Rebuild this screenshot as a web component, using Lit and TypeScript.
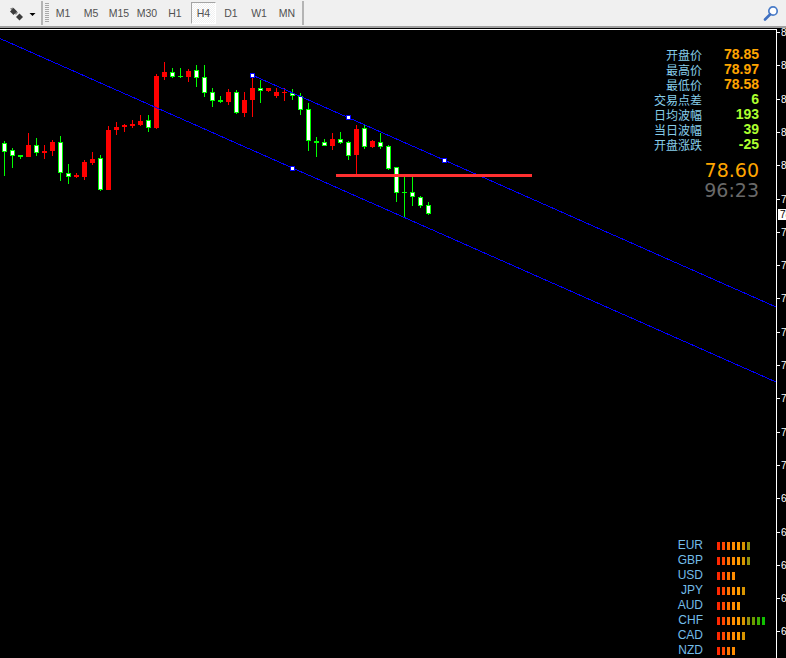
import { LitElement, html, css, svg } from "lit";
import { customElement } from "lit/decorators.js";

type Candle = [number, number, number, number, number, "g" | "r"];

const CANDLES: Candle[] = [
  [4, 141, 176, 143, 152, "g"], [12, 148, 168, 150, 156, "g"], [20, 155, 159, 155, 157, "g"],
  [28, 133, 157, 145, 157, "r"], [36, 138, 156, 145, 153, "g"], [44, 145, 159, 151, 153, "r"],
  [52, 140, 156, 142, 151, "r"], [60, 136, 181, 142, 173, "g"], [68, 164, 184, 173, 177, "g"],
  [76, 173, 178, 175, 177, "r"], [84, 160, 180, 162, 177, "r"], [92, 152, 165, 159, 163, "r"],
  [100, 155, 191, 158, 190, "g"], [108, 126, 190, 130, 190, "r"], [116, 122, 135, 127, 130, "r"],
  [124, 124, 132, 125, 127, "r"], [132, 120, 128, 124, 126, "r"], [140, 115, 126, 121, 125, "r"],
  [148, 115, 132, 120, 128, "g"], [156, 74, 129, 76, 128, "r"], [164, 62, 80, 72, 77, "r"],
  [172, 68, 78, 72, 77, "g"], [180, 68, 78, 76, 77, "g"], [188, 69, 82, 71, 77, "r"],
  [196, 65, 87, 70, 78, "g"], [204, 65, 97, 77, 93, "g"], [212, 88, 107, 92, 101, "g"],
  [220, 96, 103, 100, 102, "g"], [228, 89, 105, 92, 102, "r"], [236, 90, 114, 92, 113, "g"],
  [244, 92, 117, 100, 113, "r"], [252, 78, 117, 88, 100, "r"], [260, 80, 103, 88, 91, "g"],
  [268, 88, 92, 88, 91, "r"], [276, 88, 98, 92, 96, "r"], [284, 88, 101, 92, 93, "r"],
  [292, 89, 100, 93, 96, "g"], [300, 93, 115, 96, 110, "g"], [308, 103, 151, 109, 141, "g"],
  [316, 137, 157, 141, 143, "g"], [324, 139, 146, 142, 146, "g"], [332, 133, 150, 139, 146, "r"],
  [340, 132, 144, 139, 143, "g"], [348, 141, 160, 142, 156, "g"], [356, 125, 175, 129, 155, "r"],
  [364, 124, 149, 128, 147, "g"], [372, 140, 148, 141, 147, "r"], [380, 133, 149, 142, 147, "g"],
  [388, 145, 170, 146, 169, "g"], [396, 167, 202, 167, 193, "g"], [404, 175, 217, 192, 193, "g"],
  [412, 175, 206, 192, 197, "g"], [420, 196, 208, 197, 206, "g"], [428, 202, 215, 205, 214, "g"],
];

const HANDLES: [number, number][] = [[250, 73], [346, 115], [442, 158], [290, 166]];
const TIMEFRAMES = ["M1", "M5", "M15", "M30", "H1", "H4", "D1", "W1", "MN"];
const STATS: [string, string, "o" | "y"][] = [
  ["开盘价", "78.85", "o"], ["最高价", "78.97", "o"], ["最低价", "78.58", "o"],
  ["交易点差", "6", "y"], ["日均波幅", "193", "y"], ["当日波幅", "39", "y"], ["开盘涨跌", "-25", "y"],
];
const STRENGTH: [string, number][] = [
  ["EUR", 7], ["GBP", 7], ["USD", 4], ["JPY", 6], ["AUD", 5], ["CHF", 10], ["CAD", 6], ["NZD", 4],
];
const SEG = ["#ff2800", "#ff4800", "#ff7400", "#ff8c00", "#ff9c00", "#d89400", "#949410", "#6c9c00", "#40b000", "#10c000"];

@customElement("app-root")
export class AppRoot extends LitElement {
  static styles = css`
    :host { display: block; width: 786px; height: 658px; overflow: hidden; background: #000;
      font-family: "Liberation Sans", Arial, "Noto Sans CJK SC", sans-serif; }
    .toolbar { display: flex; align-items: center; height: 26px; background: #f0f0f0;
      border-bottom: 2px solid #a0a0a0; box-sizing: content-box; }
    .menu { width: 41px; height: 26px; flex: none; display: block; }
    .sep { width: 2px; height: 24px; background: #b4b4b4; flex: none; }
    .grip { width: 4px; height: 20px; margin-left: 2px; flex: none;
      background: repeating-linear-gradient(#a8a8a8 0 1px, #f0f0f0 1px 2px); }
    .tfs { display: flex; flex: none; margin-right: 1px; }
    .tf { width: 28px; height: 22px; box-sizing: border-box; display: flex; align-items: center;
      justify-content: center; font-size: 10.5px; color: #505050; }
    .tf.on { width: 25px; margin: 0 1px 0 2px; border: 1px solid; border-color: #a4a4a4 #fff #fff #a4a4a4;
      background: repeating-conic-gradient(#fff 0 25%, #f0f0f0 0 50%) 0 0 / 2px 2px; }
    .spacer { flex: 1; }
    .search { display: block; width: 16px; height: 16px; margin-right: 7px; flex: none; }
    .chart { position: relative; height: 630px; background: #000; overflow: hidden; }
    .plot { display: block; width: 786px; height: 630px; }
    .axis { font-size: 10px; fill: #fff; }
    .axis-now { font-size: 10px; fill: #000; }
    .info { position: absolute; top: 19px; right: 27px; display: flex; flex-direction: column; align-items: flex-end; }
    .stats { display: grid; grid-template-columns: auto 57px; grid-auto-rows: 15px; align-items: center; justify-items: end; }
    .lab { font-size: 12px; line-height: 15px; color: #87ceeb; font-family: "Noto Sans CJK SC", sans-serif; }
    .val { font-size: 14px; line-height: 15px; font-weight: 700; }
    .o { color: #ffa500; }
    .y { color: #adff2f; }
    .big { font-size: 19px; line-height: 19px; font-family: "DejaVu Sans", sans-serif; }
    .price { color: #ffa500; margin-top: 9px; }
    .timer { color: #696969; margin-top: 1px; }
    .strength { position: absolute; top: 510px; left: 660px; display: grid;
      grid-template-columns: 43px auto; column-gap: 14px; grid-auto-rows: 15px; align-items: center; }
    .cur { font-size: 12px; line-height: 15px; color: #74bde8; text-align: right; }
    .bars { display: flex; gap: 2px; }
    .seg { width: 3px; height: 8px; }
  `;

  private candle(c: Candle) {
    const [x, wt, wb, bt, bb, k] = c;
    const col = k === "g" ? "#00ff00" : "#ff0000";
    const h = bb - bt;
    return svg`<rect x=${x} y=${wt} width="1" height=${wb - wt} fill=${col}></rect>
      <rect x=${x - 2} y=${bt} width="5" height=${h} fill=${col}></rect>
      ${k === "g" && h > 2 ? svg`<rect x=${x - 1} y=${bt + 1} width="3" height=${h - 2} fill="#fff"></rect>` : ""}`;
  }

  private axis() {
    const ticks = [];
    for (let n = 0; n < 19; n++) {
      const y = Math.round(32 + 33.3 * n) - 28;
      const v = (79.1 - (n - 5) * 1.1).toFixed(2);
      ticks.push(svg`<rect x="777" y=${y} width="3" height="1" fill="#fff"></rect>
        <text class="axis" x="781" y=${y + 4}>${v}</text>`);
    }
    return ticks;
  }

  render() {
    return html`
      <div class="toolbar">
        <svg class="menu" viewBox="0 0 41 26">
          <path d="M10 8.5l3-1 5 5-2 2.5z" fill="#8a8a8a"></path>
          <path d="M13.5 8l3.5 3.5-3.5 3.5-3.5-3.5z" fill="#3c3c3c"></path>
          <path d="M19.5 13.5l3.5 3.5-3.5 3.5-3.5-3.5z" fill="#3c3c3c"></path>
          <path d="M29.5 13h6l-3 3z" fill="#000"></path>
        </svg>
        <div class="sep"></div>
        <div class="grip"></div>
        <div class="tfs">
          ${TIMEFRAMES.map((t) => html`<div class="tf ${t === "H4" ? "on" : ""}">${t}</div>`)}
        </div>
        <div class="sep"></div>
        <div class="spacer"></div>
        <svg class="search" viewBox="0 0 16 16">
          <circle cx="10" cy="6" r="4.2" fill="#fff" stroke="#4a7cc8" stroke-width="1.7"></circle>
          <path d="M7 9.5L2 14.5" stroke="#3f6fc0" stroke-width="2.6" stroke-linecap="round"></path>
        </svg>
      </div>
      <div class="chart">
        <svg class="plot" viewBox="0 0 786 630" shape-rendering="crispEdges">
          <rect x="0" y="1" width="777" height="1" fill="#fff"></rect>
          <rect x="776" y="1" width="1" height="629" fill="#fff"></rect>
          ${this.axis()}
          <rect x="778" y="181" width="8" height="11" fill="#fff"></rect>
          <text class="axis-now" x="780" y="190">78.60</text>
          <g transform="translate(0,-28)">${CANDLES.map((c) => this.candle(c))}</g>
          <line x1="252" y1="47" x2="776" y2="279" stroke="#0000ff"></line>
          <line x1="0" y1="10.5" x2="776" y2="354" stroke="#0000ff"></line>
          ${HANDLES.map(([x, y]) => svg`<rect x=${x + 0.5} y=${y - 27.5} width="4" height="4" fill="#fff" stroke="#0000ff"></rect>`)}
          <rect x="336" y="146" width="196" height="3" fill="#ff3030"></rect>
        </svg>
        <div class="info">
          <div class="stats">
            ${STATS.map(([l, v, k]) => html`<div class="lab">${l}</div><div class="val ${k}">${v}</div>`)}
          </div>
          <div class="big price">78.60</div>
          <div class="big timer">96:23</div>
        </div>
        <div class="strength">
          ${STRENGTH.map(([c, n]) => html`<div class="cur">${c}</div>
            <div class="bars">${SEG.slice(0, n).map((s) => html`<div class="seg" style="background:${s}"></div>`)}</div>`)}
        </div>
      </div>
    `;
  }
}
